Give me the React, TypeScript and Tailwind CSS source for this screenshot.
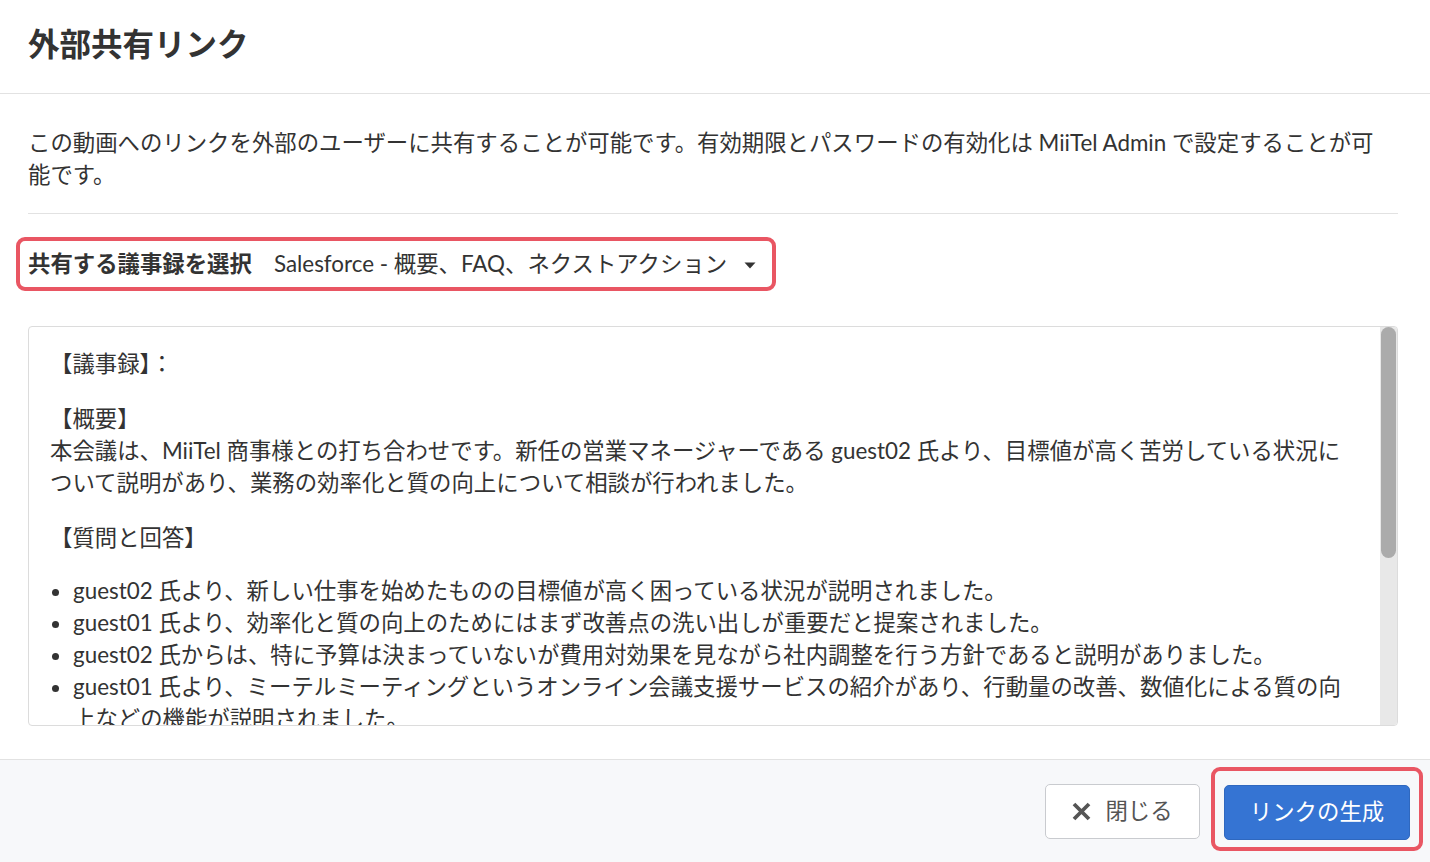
import React from "react";

const font = { fontFamily: "Lato, 'Noto Sans CJK JP', sans-serif" };

export default function App() {
  return (
    <div
      className="w-[1430px] h-[862px] bg-white text-[#333] flex flex-col overflow-hidden font-['Lato','Noto_Sans_CJK_JP',sans-serif]"
      style={font}
    >
      {/* Header */}
      <div className="h-[94px] shrink-0 border-b border-[#e2e2e2] flex items-center pl-[28px] pb-[4px]">
        <h1 className="text-[31.5px] font-bold leading-none">外部共有リンク</h1>
      </div>

      {/* Body */}
      <div className="flex-1 flex flex-col pl-[28px] pr-[32px] pt-[33px]">
        <p className="text-[22.4px] leading-[32px] pb-[22px] border-b border-[#e2e2e2]">
          この動画へのリンクを外部のユーザーに共有することが可能です。有効期限とパスワードの有効化は MiiTel Admin で設定することが可
          <br />
          能です。
        </p>

        <div className="mt-[23px] -ml-[12px] self-start flex items-center h-[54px] border-4 border-[#e95663] rounded-[9px] pl-[8px] pr-[16px]">
          <span className="text-[22.4px] font-bold leading-none">共有する議事録を選択</span>
          <span className="ml-[22px] text-[22.4px] leading-none">Salesforce - 概要、FAQ、ネクストアクション</span>
          <svg className="ml-[17px] mt-[2px]" width="12" height="7" viewBox="0 0 12 7">
            <path d="M0.5 0.5 L11.5 0.5 L6 6.5 Z" fill="#333" />
          </svg>
        </div>

        <div className="mt-[35px] h-[400px] border border-[#dcdcdc] rounded-[4px] flex overflow-hidden">
          <div className="flex-1 overflow-hidden pl-[21px] pr-[14px] pt-[21px] text-[22.4px] leading-[32px]">
            <p className="mb-[23px]">【議事録】：</p>
            <p className="mb-[23px]">
              【概要】
              <br />
              本会議は、MiiTel 商事様との打ち合わせです。新任の営業マネージャーである guest02 氏より、目標値が高く苦労している状況に
              <br />
              ついて説明があり、業務の効率化と質の向上について相談が行われました。
            </p>
            <p className="mb-[21px]">【質問と回答】</p>
            <ul className="list-disc pl-[23px]">
              <li>guest02 氏より、新しい仕事を始めたものの目標値が高く困っている状況が説明されました。</li>
              <li>guest01 氏より、効率化と質の向上のためにはまず改善点の洗い出しが重要だと提案されました。</li>
              <li>guest02 氏からは、特に予算は決まっていないが費用対効果を見ながら社内調整を行う方針であると説明がありました。</li>
              <li>
                guest01 氏より、ミーテルミーティングというオンライン会議支援サービスの紹介があり、行動量の改善、数値化による質の向
                <br />
                上などの機能が説明されました。
              </li>
              <li>guest02 氏より、導入を検討したいとの意向が示されました。</li>
            </ul>
          </div>
          <div className="w-[17px] shrink-0 bg-[#e8e8e8] flex flex-col px-[1px]">
            <div className="h-[231px] rounded-[8px] bg-[#ababab]" />
          </div>
        </div>
      </div>

      {/* Footer */}
      <div className="h-[103px] shrink-0 border-t border-[#e2e2e2] bg-[#f7f8fa] flex justify-end items-start pt-[7px] pr-[7px]">
        <button className="mt-[17px] w-[155px] h-[55px] bg-white border border-[#c9cbcf] rounded-[5px] flex items-center justify-center gap-[14px] text-[22.4px] text-[#555]">
          <svg width="19" height="19" viewBox="0 0 19 19">
            <path d="M2 2 L17 17 M17 2 L2 17" stroke="#555" strokeWidth="3.8" strokeLinecap="butt" />
          </svg>
          <span className="leading-none">閉じる</span>
        </button>
        <div className="ml-[11px] border-4 border-[#e95663] rounded-[9px] pl-[9px] pr-[9px] pt-[14px] pb-[7px]">
          <button className="w-[186px] h-[55px] bg-[#3574d3] border border-[#2f68bf] rounded-[5px] text-white text-[22.4px] flex items-center justify-center">
            <span className="leading-none">リンクの生成</span>
          </button>
        </div>
      </div>
    </div>
  );
}
